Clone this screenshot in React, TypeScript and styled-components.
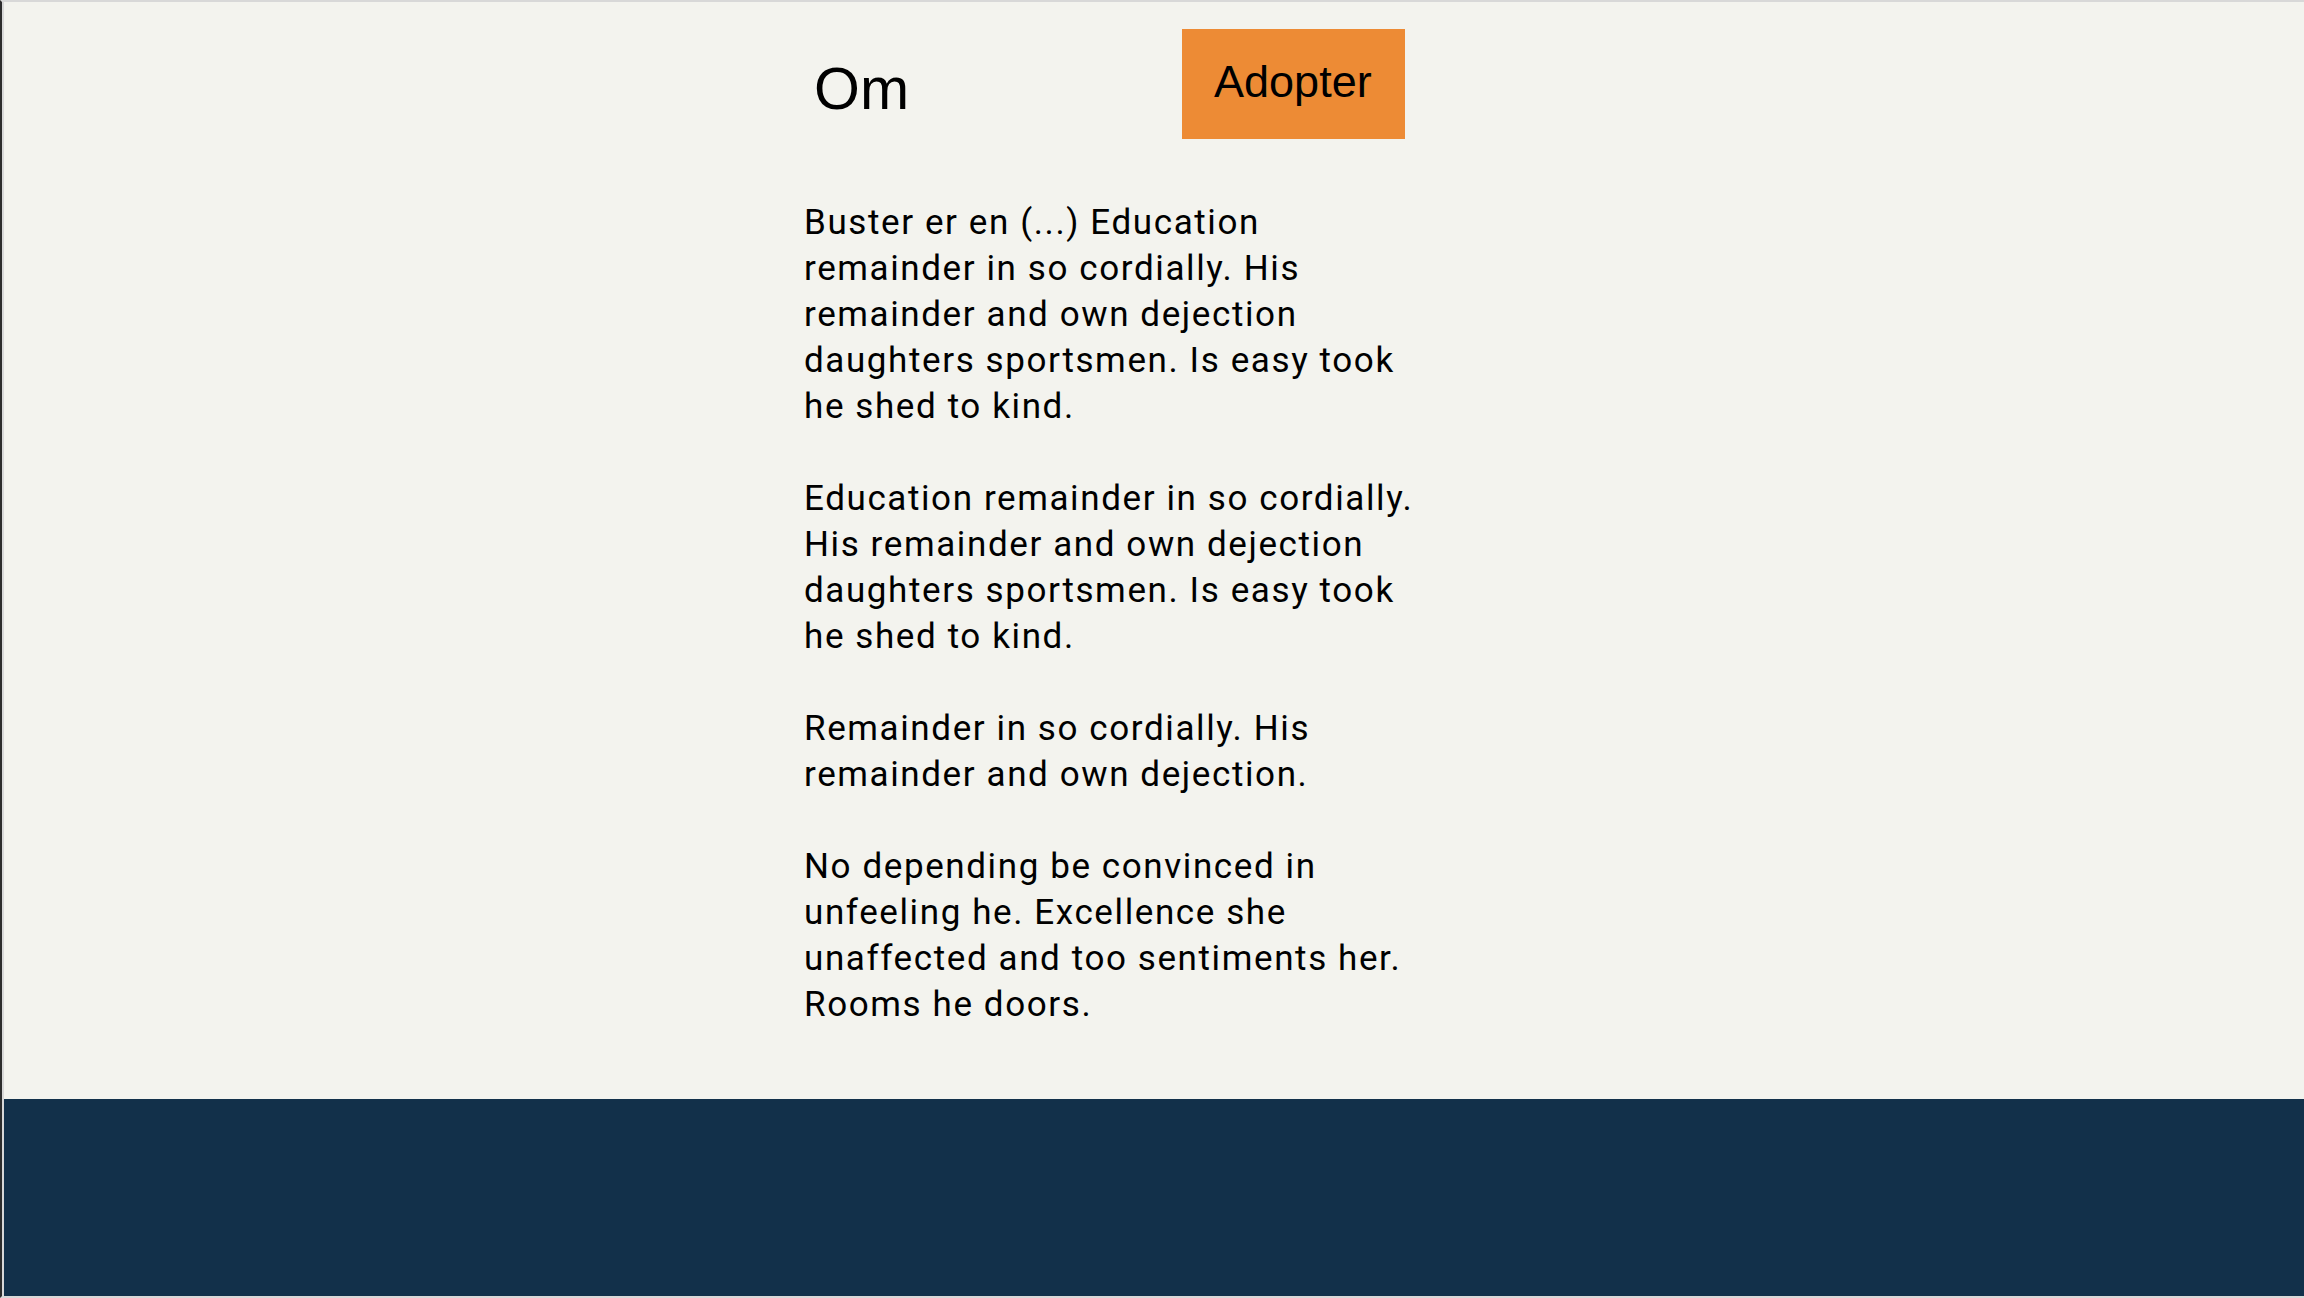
import React from "react";
import styled, { createGlobalStyle } from "styled-components";

const GlobalStyle = createGlobalStyle`
  html, body {
    margin: 0;
    padding: 0;
    background: #d8d8d8;
  }
  body {
    font-family: "Liberation Sans", Arial, sans-serif;
    color: #000;
  }
  * { box-sizing: border-box; }
`;

const Frame = styled.div`
  min-height: 100vh;
  display: flex;
  flex-direction: column;
  border-top: 2px solid #d8d8d8;
  border-bottom: 2px solid #d8d8d8;
  border-left: 2px solid #2c2c2c;
  padding-left: 2px;
  background: #d8d8d8;
`;

const Surface = styled.div`
  flex: 1;
  display: flex;
  flex-direction: column;
  background: #f3f3ee;
`;

const Main = styled.main`
  flex: 1;
`;

const Column = styled.div`
  width: 700px;
  margin: 0 auto;
`;

const Header = styled.header`
  display: flex;
  align-items: flex-start;
  gap: 273px;
  padding-top: 27px;
`;

const Title = styled.h1`
  margin: 26px 0 0 10px;
  font-family: "Liberation Sans", Arial, sans-serif;
  font-weight: 400;
  font-size: 59px;
  line-height: normal;
`;

const AdoptButton = styled.button`
  border: none;
  border-radius: 0;
  background: #ed8b35;
  color: #000;
  font-family: "Liberation Sans", Arial, sans-serif;
  font-size: 45px;
  line-height: normal;
  padding: 27px 33px 31px 32px;
  cursor: pointer;
`;

const Body = styled.div`
  margin-top: 61px;
  max-width: 625px;
  font-family: Roboto, "Noto Sans", sans-serif;
  font-size: 35px;
  letter-spacing: 1.6px;
  line-height: 46px;
`;

const Paragraph = styled.p`
  margin: 0 0 46px;
`;

const Footer = styled.footer`
  height: 197px;
  background: #12304a;
`;

const paragraphs = [
  "Buster er en (...) Education remainder in so cordially. His remainder and own dejection daughters sportsmen. Is easy took he shed to kind.",
  "Education remainder in so cordially. His remainder and own dejection daughters sportsmen. Is easy took he shed to kind.",
  "Remainder in so cordially. His remainder and own dejection.",
  "No depending be convinced in unfeeling he. Excellence she unaffected and too sentiments her. Rooms he doors.",
];

export default function App() {
  return (
    <>
      <GlobalStyle />
      <Frame>
        <Surface>
          <Main>
            <Column>
              <Header>
                <Title>Om</Title>
                <AdoptButton>Adopter</AdoptButton>
              </Header>
              <Body>
                {paragraphs.map((p, i) => (
                  <Paragraph key={i}>{p}</Paragraph>
                ))}
              </Body>
            </Column>
          </Main>
          <Footer />
        </Surface>
      </Frame>
    </>
  );
}
